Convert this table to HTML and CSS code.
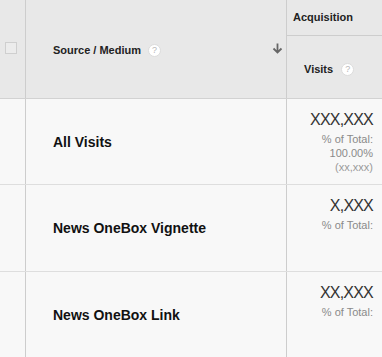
FILE: index.html
```html
<!DOCTYPE html>
<html>
<head>
<meta charset="utf-8">
<link rel="stylesheet" href="styles.css">
</head>
<body>
<div class="table">
  <div class="head">
    <div class="cell check"><span class="box"></span></div>
    <div class="cell source">
      <span class="title">Source / Medium</span>
      <span class="help">?</span>
      <svg class="sort" width="11" height="11" viewBox="0 0 11 11"><path d="M5.5 0.5 V9.5 M1.5 5.5 L5.5 9.5 L9.5 5.5" fill="none" stroke="#666" stroke-width="1.8"/></svg>
    </div>
    <div class="cell metric">
      <div class="group">Acquisition</div>
      <div class="col"><span class="title">Visits</span><span class="help">?</span></div>
    </div>
  </div>
  <div class="row">
    <div class="cell check"></div>
    <div class="cell name">All Visits</div>
    <div class="cell value">
      <div class="num">XXX,XXX</div>
      <div class="sub">% of Total:</div>
      <div class="sub">100.00%</div>
      <div class="sub light">(xx,xxx)</div>
    </div>
  </div>
  <div class="row r2">
    <div class="cell check"></div>
    <div class="cell name">News OneBox Vignette</div>
    <div class="cell value">
      <div class="num">X,XXX</div>
      <div class="sub">% of Total:</div>
    </div>
  </div>
  <div class="row">
    <div class="cell check"></div>
    <div class="cell name">News OneBox Link</div>
    <div class="cell value">
      <div class="num">XX,XXX</div>
      <div class="sub">% of Total:</div>
    </div>
  </div>
</div>
</body>
</html>
```

FILE: styles.css
```css
html, body {
  margin: 0;
  padding: 0;
  background: #f8f8f8;
}
body {
  font-family: "Liberation Sans", Arial, sans-serif;
  color: #222;
  width: 382px;
  height: 357px;
  overflow: hidden;
}
.table {
  display: flex;
  flex-direction: column;
}
.head, .row {
  display: grid;
  grid-template-columns: 26px 261px 95px;
  box-sizing: border-box;
}
.head {
  height: 99px;
  background: #e8e8e8;
  border-bottom: 1px solid #d2d2d2;
}
.row {
  height: 86px;
  border-bottom: 1px solid #dedede;
}
.row.r2 {
  height: 87px;
}
.cell {
  box-sizing: border-box;
}
.check, .source, .name {
  border-right: 1px solid #cdcdcd;
}
.head .check {
  display: flex;
  align-items: center;
  padding-left: 5px;
  padding-bottom: 2px;
}
.box {
  width: 10px;
  height: 10px;
  border: 1px solid #cfcfcf;
  background: #ececec;
}
.source {
  display: flex;
  align-items: center;
  padding-left: 27px;
  padding-right: 3px;
  padding-top: 2px;
}
.title {
  font-size: 11px;
  font-weight: bold;
  color: #222;
}
.help {
  display: inline-flex;
  align-items: center;
  justify-content: center;
  width: 11px;
  height: 11px;
  border-radius: 50%;
  background: #fff;
  border: 1px solid #dcdcdc;
  color: #b8b8b8;
  font-size: 9px;
  line-height: 11px;
  margin-left: 7px;
}
.sort {
  margin-left: auto;
  margin-bottom: 3px;
}
.metric {
  display: flex;
  flex-direction: column;
}
.group {
  height: 36px;
  box-sizing: border-box;
  border-bottom: 1px solid #cdcdcd;
  display: flex;
  align-items: center;
  padding-left: 6px;
  padding-bottom: 2px;
  font-size: 11px;
  font-weight: bold;
}
.col {
  flex: 1;
  display: flex;
  align-items: center;
  padding-left: 17px;
  padding-top: 4px;
}
.col .help {
  margin-left: 8px;
}
.name {
  display: flex;
  align-items: center;
  padding-left: 27px;
  font-size: 14px;
  font-weight: bold;
  color: #111;
}
.value {
  text-align: right;
  padding-right: 9px;
  padding-top: 11px;
}
.num {
  font-size: 16px;
  line-height: 20px;
  letter-spacing: -0.8px;
  color: #333;
  margin-bottom: 2px;
}
.sub {
  font-size: 11px;
  line-height: 14px;
  color: #8a8a8a;
}
.sub.light {
  color: #9a9a9a;
}
```
